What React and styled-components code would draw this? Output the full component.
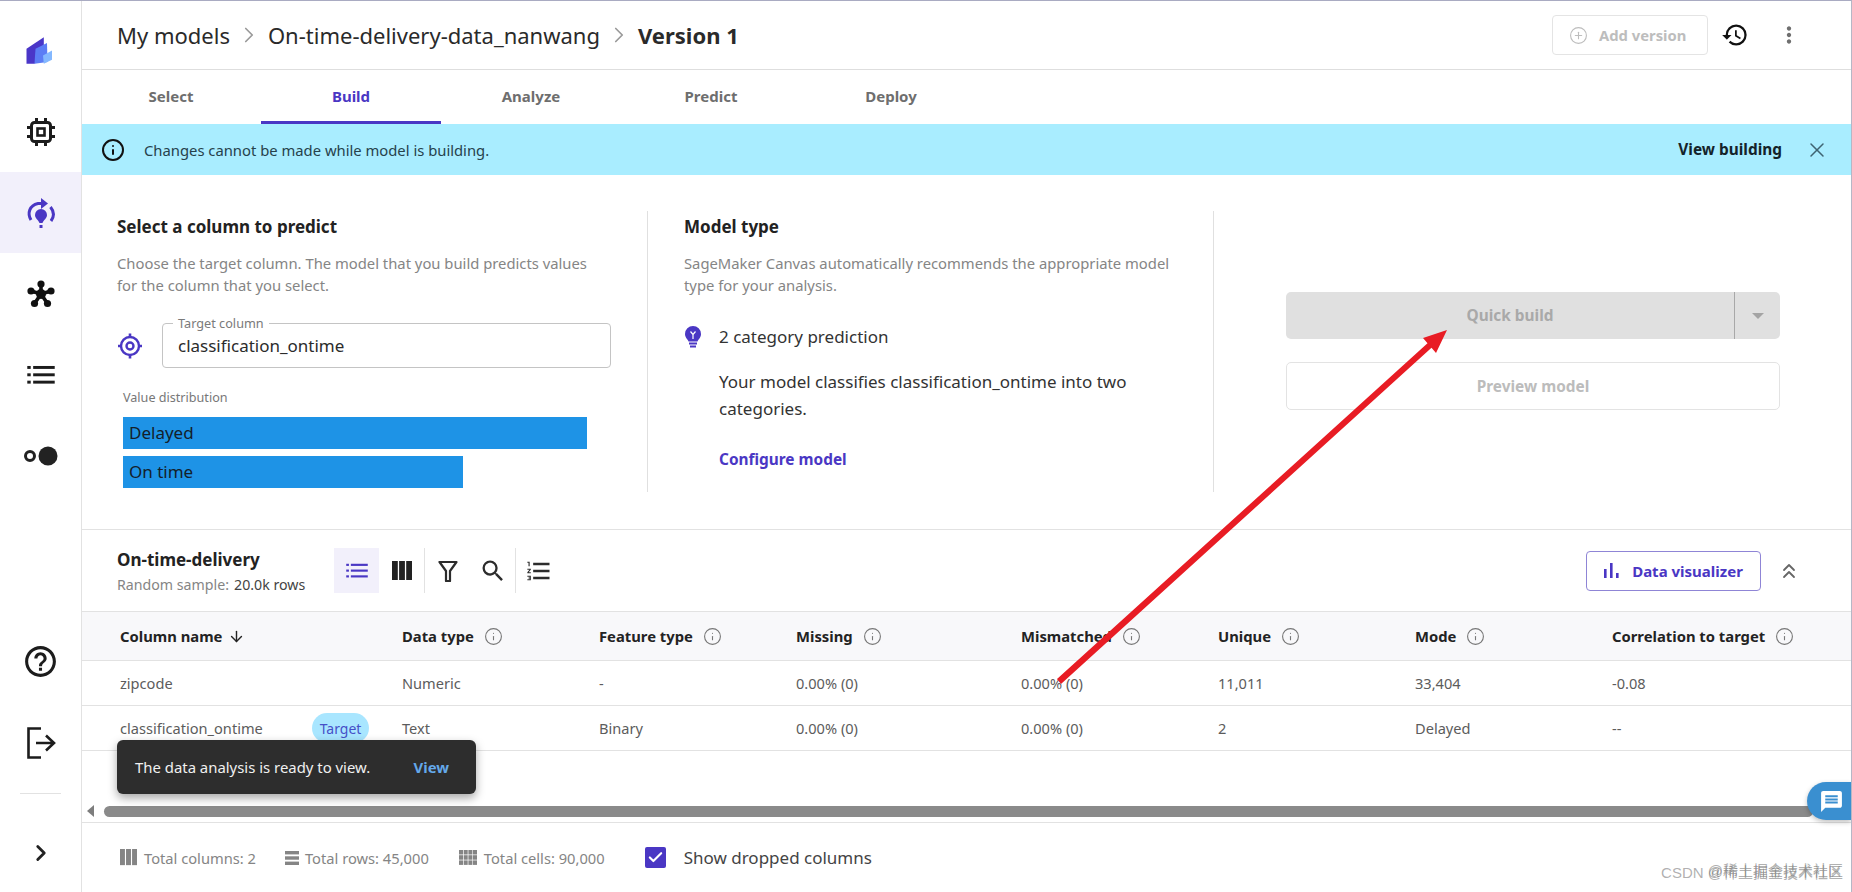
import React from "react";
import styled, { createGlobalStyle } from "styled-components";
import { ChevronRight, ChevronsUp, Info, X, Check, ArrowDown, CirclePlus } from "lucide-react";
import { MdHistory, MdMoreVert, MdSearch, MdFormatListNumbered, MdMessage, MdHelpOutline } from "react-icons/md";

const PURPLE = "#4a37c4";

const Global = createGlobalStyle`
  * { box-sizing: border-box; }
  html, body { margin: 0; padding: 0; background: #fff; }
  body { font-family: "Noto Sans", "Open Sans", sans-serif; color: #222; overflow: hidden; }
`;

const Page = styled.div`
  position: relative;
  width: 1852px;
  height: 892px;
  display: flex;
  border-top: 1px solid #a9abc2;
  border-right: 1px solid #b5b7c6;
  overflow: hidden;
`;

const Sidebar = styled.nav`
  width: 82px;
  flex: none;
  display: flex;
  flex-direction: column;
  padding-top: 9px;
  border-right: 1px solid #e2e2e2;
`;

const NavItem = styled.div`
  height: 81px;
  flex: none;
  display: flex;
  align-items: center;
  justify-content: center;
  background: ${(p) => (p.$active ? "#f2f0fb" : "transparent")};
  color: ${(p) => (p.$active ? PURPLE : "#1c1c1c")};
`;

const NavBottom = styled.div`
  margin-top: auto;
  display: flex;
  flex-direction: column;
`;

const NavRule = styled.div`
  height: 1px;
  margin: 10px 20px 0;
  background: #e2e2e2;
`;

const NavExpand = styled.div`
  height: 98px;
  padding-top: 20px;
  display: flex;
  align-items: center;
  justify-content: center;
  color: #222;
`;

const Main = styled.main`
  position: relative;
  flex: 1;
  min-width: 0;
  display: flex;
  flex-direction: column;
`;

const Header = styled.header`
  height: 69px;
  flex: none;
  display: flex;
  align-items: center;
  padding: 0 35px 0 35px;
  border-bottom: 1px solid #dedede;
`;

const Crumb = styled.span`
  font-size: 22px;
  font-weight: ${(p) => (p.$current ? 700 : 400)};
  color: #2a2a2a;
  white-space: nowrap;
`;

const CrumbSep = styled.span`
  display: flex;
  width: 38px;
  justify-content: center;
  color: #9a9a9a;
`;

const HeaderActions = styled.div`
  margin-left: auto;
  display: flex;
  align-items: center;
`;

const AddVersion = styled.div`
  width: 156px;
  height: 40px;
  border: 1px solid #e4e4e4;
  border-radius: 4px;
  display: flex;
  align-items: center;
  gap: 11px;
  padding-left: 16px;
  color: #bdbdbd;
  font-size: 14.8px;
  font-weight: 700;
`;

const HistoryBtn = styled.div`
  width: 54px;
  display: flex;
  justify-content: center;
  color: #111;
`;

const MoreBtn = styled.div`
  width: 54px;
  display: flex;
  justify-content: center;
  color: #6f6f6f;
`;

const Tabs = styled.div`
  height: 54px;
  flex: none;
  display: flex;
  margin-left: -1px;
`;

const Tab = styled.div`
  width: 180px;
  display: flex;
  align-items: center;
  justify-content: center;
  padding-top: 1px;
  font-size: 15px;
  font-weight: 700;
  color: ${(p) => (p.$active ? PURPLE : "#6e6e6e")};
  border-bottom: 3px solid ${(p) => (p.$active ? PURPLE : "transparent")};
`;

const Banner = styled.div`
  height: 51px;
  flex: none;
  display: flex;
  align-items: center;
  background: #a9edff;
  padding: 0 22px 0 19px;
  color: #173039;
`;

const BannerText = styled.span`
  font-size: 14.8px;
  margin-left: 19px;
  color: #26424c;
`;

const BannerAction = styled.span`
  margin-left: auto;
  font-size: 15.4px;
  font-weight: 700;
  color: #14232a;
`;

const BannerClose = styled.span`
  display: flex;
  margin-left: 23px;
  color: #3f6472;
`;

const Panels = styled.section`
  height: 355px;
  flex: none;
  display: grid;
  grid-template-columns: 565px 566px 1fr;
  padding: 36px 0 37px;
  border-bottom: 1px solid #e2e2e2;
`;

const Panel = styled.div`
  padding-left: ${(p) => p.$pad}px;
  border-left: ${(p) => (p.$rule ? "1px solid #e0e0e0" : "none")};
  min-width: 0;
`;

const PanelTitle = styled.h2`
  margin: 0;
  font-size: 17px;
  line-height: 32px;
  font-weight: 700;
  color: #222;
`;

const PanelDesc = styled.p`
  margin: 9px 0 0;
  width: 490px;
  font-size: 14.8px;
  line-height: 22px;
  color: #858585;
`;

const TargetRow = styled.div`
  display: flex;
  align-items: center;
  gap: 19px;
  margin-top: 27px;
`;

const TargetField = styled.div`
  position: relative;
  width: 449px;
  height: 45px;
  border: 1px solid #c4c4c4;
  border-radius: 4px;
  display: flex;
  align-items: center;
  padding: 0 15px;
  font-size: 17px;
  color: #2b2b2b;
`;

const FieldLabel = styled.span`
  position: absolute;
  top: -9px;
  left: 10px;
  padding: 0 5px;
  background: #fff;
  font-size: 12.7px;
  line-height: 16px;
  color: #7a7a7a;
`;

const DistLabel = styled.div`
  margin: 22px 0 0 6px;
  font-size: 12.6px;
  line-height: 16px;
  color: #777;
`;

const DistBars = styled.div`
  margin: 11px 0 0 6px;
  display: flex;
  flex-direction: column;
  gap: 7px;
`;

const DistBar = styled.div`
  height: 32px;
  background: #1e93e6;
  padding-left: 6px;
  font-size: 17px;
  line-height: 31px;
  color: #14202a;
`;

const PredictRow = styled.div`
  display: flex;
  align-items: center;
  gap: 17px;
  margin-top: 25px;
  font-size: 17px;
  line-height: 32px;
  color: #333;
`;

const PredictText = styled.p`
  margin: 15px 0 0 35px;
  width: 420px;
  font-size: 17px;
  line-height: 27px;
  color: #333;
`;

const ConfigureLink = styled.div`
  margin: 26px 0 0 35px;
  font-size: 15.4px;
  line-height: 24px;
  font-weight: 700;
  color: ${PURPLE};
`;

const BuildPanel = styled(Panel)`
  padding: 81px 71px 0 72px;
`;

const SplitButton = styled.div`
  height: 47px;
  display: flex;
  background: #e0e0e0;
  border-radius: 5px;
  color: #a9a9a9;
  font-size: 15.4px;
  font-weight: 700;
`;

const SplitMain = styled.div`
  flex: 1;
  display: flex;
  align-items: center;
  justify-content: center;
`;

const SplitCaret = styled.div`
  width: 46px;
  border-left: 1px solid #a8a8a8;
  display: flex;
  align-items: center;
  justify-content: center;
`;

const Caret = styled.span`
  width: 0;
  height: 0;
  border-left: 6px solid transparent;
  border-right: 6px solid transparent;
  border-top: 6px solid #a4a4a4;
`;

const PreviewButton = styled.div`
  height: 48px;
  margin-top: 23px;
  border: 1px solid #e3e3e3;
  border-radius: 5px;
  display: flex;
  align-items: center;
  justify-content: center;
  color: #bcbcbc;
  font-size: 15.4px;
  font-weight: 700;
`;

const Toolbar = styled.div`
  height: 81px;
  flex: none;
  display: flex;
  align-items: center;
  padding: 0 49px 0 35px;
`;

const DataTitle = styled.div`
  width: 217px;
  flex: none;
`;

const DataName = styled.div`
  font-size: 17px;
  line-height: 24px;
  font-weight: 700;
  color: #222;
`;

const DataSample = styled.div`
  margin-top: 4px;
  font-size: 14.2px;
  line-height: 18px;
  color: #858585;
`;

const SampleCount = styled.span`
  margin-left: 5px;
  color: #444;
`;

const ToolBtn = styled.div`
  width: 45px;
  height: 45px;
  display: flex;
  align-items: center;
  justify-content: center;
  color: ${(p) => (p.$active ? PURPLE : "#2c2c2c")};
  background: ${(p) => (p.$active ? "#f2f0fb" : "transparent")};
`;

const ToolRule = styled.div`
  width: 1px;
  height: 45px;
  background: #e2e2e2;
`;

const VisualizerBtn = styled.div`
  margin-left: auto;
  width: 175px;
  height: 40px;
  border: 1px solid #8f85d6;
  border-radius: 4px;
  display: flex;
  align-items: center;
  justify-content: center;
  gap: 13px;
  color: ${PURPLE};
  font-size: 15px;
  font-weight: 700;
`;

const CollapseBtn = styled.div`
  width: 27px;
  margin-left: 14px;
  display: flex;
  justify-content: center;
  color: #666;
`;

const Row = styled.div`
  display: grid;
  grid-template-columns: 282px 197px 197px 225px 197px 197px 197px 1fr;
  align-items: center;
  height: ${(p) => (p.$head ? 50 : 45)}px;
  padding-left: 38px;
  background: ${(p) => (p.$head ? "#f8f8fa" : "#fff")};
  border-top: ${(p) => (p.$head ? "1px solid #e2e2e2" : "none")};
  border-bottom: 1px solid #e2e2e2;
  font-size: ${(p) => (p.$head ? 14.8 : 14.6)}px;
  font-weight: ${(p) => (p.$head ? 700 : 400)};
  color: ${(p) => (p.$head ? "#232323" : "#5c5c5c")};
`;

const HeadCell = styled.div`
  display: flex;
  align-items: center;
  gap: ${(p) => p.$gap || 10}px;
  color: #232323;
  white-space: nowrap;
`;

const InfoMark = styled.span`
  display: flex;
  color: #777;
`;

const NameCell = styled.div`
  display: flex;
  align-items: center;
  justify-content: space-between;
  padding-right: 33px;
`;

const TargetPill = styled.span`
  width: 57px;
  height: 30px;
  border-radius: 15px;
  background: #a9e6ff;
  color: #4650c8;
  display: flex;
  align-items: center;
  justify-content: center;
  font-size: 14px;
`;

const ScrollArea = styled.div`
  height: 72px;
  flex: none;
  display: flex;
  align-items: flex-end;
  gap: 10px;
  padding: 0 38px 5px 5px;
  border-bottom: 1px solid #e2e2e2;
`;

const ScrollArrow = styled.span`
  width: 0;
  height: 0;
  border-top: 6px solid transparent;
  border-bottom: 6px solid transparent;
  border-right: 7px solid #7d7d7d;
`;

const ScrollThumb = styled.div`
  flex: 1;
  height: 11px;
  border-radius: 6px;
  background: #8a8a8a;
`;

const Footer = styled.footer`
  flex: 1;
  display: flex;
  align-items: center;
  padding: 0 0 0 38px;
  font-size: 14.7px;
  color: #858585;
`;

const Stat = styled.div`
  display: flex;
  align-items: center;
  gap: ${(p) => p.$gap}px;
  margin-right: ${(p) => p.$after}px;
  white-space: nowrap;
`;

const CheckBox = styled.span`
  width: 21px;
  height: 21px;
  border-radius: 2px;
  background: ${PURPLE};
  color: #fff;
  display: flex;
  align-items: center;
  justify-content: center;
`;

const CheckLabel = styled.span`
  margin-left: 18px;
  font-size: 17px;
  color: #444;
`;

const Toast = styled.div`
  position: absolute;
  left: 35px;
  bottom: 98px;
  width: 359px;
  height: 54px;
  background: #2d2d2d;
  border-radius: 6px;
  box-shadow: 0 4px 10px rgba(0, 0, 0, 0.35);
  display: flex;
  align-items: center;
  padding: 0 27px 0 18px;
  color: #f0f0f0;
  font-size: 14.9px;
`;

const ToastAction = styled.span`
  margin-left: auto;
  font-weight: 700;
  color: #64a8ea;
`;

const ChatBubble = styled.div`
  position: absolute;
  top: 781px;
  right: 0;
  width: 44px;
  height: 38px;
  border-radius: 19px 0 0 19px;
  background: #3a8fd0;
  box-shadow: 0 2px 5px rgba(0, 0, 0, 0.25);
  color: #fff;
  display: flex;
  align-items: center;
  justify-content: center;
  padding-left: 4px;
`;

const Annotation = styled.svg`
  position: absolute;
  top: -1px;
  left: 0;
  width: 1852px;
  height: 892px;
  pointer-events: none;
`;

const Watermark = styled.span`
  position: absolute;
  right: ${(p) => p.$right}px;
  bottom: ${(p) => p.$bottom}px;
  font-family: "Liberation Sans", "Noto Sans CJK SC", sans-serif;
  font-size: 15px;
  line-height: 22px;
  color: rgba(110, 110, 110, 0.55);
  white-space: nowrap;
`;

const Logo = () => (
  <svg width="30" height="30" viewBox="0 0 30 30">
    <polygon points="0.5,12.8 17.8,1.2 17.8,20 8.5,27.8 0.5,27.8" fill="#4a36c8" />
    <polygon points="9.5,12.8 21,7 21.5,26 8.5,27.800" fill="#5c7df5" />
    <polygon points="17,19.500 26,14.500 26,23.800 17.800,27.800" fill="#84b8ff" />
  </svg>
);

const ChipIcon = () => (
  <svg width="30" height="30" viewBox="0 0 30 30" fill="none" stroke="#1c1c1c">
    <rect x="5.5" y="5.5" width="19" height="19" rx="3" strokeWidth="3" />
    <rect x="11.5" y="11.5" width="7" height="7" strokeWidth="2.6" />
    <path d="M10.5 1v4M19.5 1v4M10.5 25v4M19.5 25v4M1 10.5h4M1 19.5h4M25 10.5h4M25 19.5h4" strokeWidth="3" />
  </svg>
);

const BuildIcon = () => (
  <svg width="30" height="32" viewBox="0 0 30 32" fill="none">
    <path d="M5 23C1 16 3.5 8.5 12 6.5h6" stroke={PURPLE} strokeWidth="3" />
    <path d="M24.5 10C28.5 15 28 20 25 24" stroke={PURPLE} strokeWidth="3" />
    <polygon points="15,1 22,6.5 15,12" fill={PURPLE} />
    <path d="M15 12a6 6 0 0 1 6 6c0 3.5-3.5 5-4.5 8h-3c-1-3-4.500-4.500-4.500-8a6 6 0 0 1 6-6z" fill={PURPLE} />
    <rect x="13.500" y="28" width="3" height="3" fill={PURPLE} />
  </svg>
);

const NetworkIcon = () => (
  <svg width="30" height="30" viewBox="0 0 30 30" fill="#111" stroke="#111" strokeWidth="3.600">
    <path d="M15 15V5M15 15L5 12M15 15L25 12M15 15L8.500 24.500M15 15L21.500 24.500" />
    <circle cx="15" cy="15" r="5" stroke="none" />
    <circle cx="15" cy="5" r="3.600" stroke="none" />
    <circle cx="5" cy="12" r="3.600" stroke="none" />
    <circle cx="25" cy="12" r="3.600" stroke="none" />
    <circle cx="8.500" cy="24.500" r="3.600" stroke="none" />
    <circle cx="21.500" cy="24.500" r="3.600" stroke="none" />
  </svg>
);

const ListLines = ({ size = 28, color = "#1c1c1c", weight = 3 }) => (
  <svg width={size} height={size * 0.7} viewBox="0 0 28 20" fill={color}>
    <rect x="0" y="1" width="3.500" height={weight} />
    <rect x="0" y="8.500" width="3.500" height={weight} />
    <rect x="0" y="16" width="3.500" height={weight} />
    <rect x="6" y="1" width="22" height={weight} />
    <rect x="6" y="8.500" width="22" height={weight} />
    <rect x="6" y="16" width="22" height={weight} />
  </svg>
);

const DotsIcon = () => (
  <svg width="34" height="22" viewBox="0 0 34 22">
    <circle cx="6" cy="11" r="4.500" fill="none" stroke="#222" strokeWidth="3" />
    <circle cx="24" cy="11" r="9.500" fill="#222" />
  </svg>
);

const LogoutIcon = () => (
  <svg width="30" height="34" viewBox="0 0 30 34" fill="none" stroke="#1c1c1c" strokeWidth="2.600">
    <path d="M15 2.500H2.500v29H15" />
    <path d="M10 17h18M20 9.500l8 7.500-8 7.500" />
  </svg>
);

const TargetIcon = () => (
  <svg width="26" height="30" viewBox="0 0 26 30" fill="none" stroke={PURPLE}>
    <circle cx="13" cy="15" r="9" strokeWidth="2.400" />
    <circle cx="13" cy="15" r="3.500" strokeWidth="2.400" />
    <path d="M13 2.500v4M13 23.500v4M1 15h3.500M21.500 15H25" strokeWidth="2.600" />
  </svg>
);

const BulbIcon = () => (
  <svg width="18" height="22" viewBox="0 0 18 22">
    <path d="M9 0a8 8 0 0 1 8 8c0 3.500-2.500 5-3.500 7.500h-9C3.500 13 1 11.500 1 8a8 8 0 0 1 8-8z" fill={PURPLE} />
    <path d="M6.500 5.500L9 8.500l2.500-3M9 8.500V13" stroke="#fff" strokeWidth="1.200" fill="none" />
    <rect x="5" y="16.500" width="8" height="2" fill={PURPLE} />
    <rect x="6" y="19.500" width="6" height="2" fill={PURPLE} />
  </svg>
);

const ColumnsIcon = ({ size = 20, color = "#222" }) => (
  <svg width={size} height={size * 0.95} viewBox="0 0 20 19" fill={color}>
    <rect x="0" y="0" width="5.800" height="19" />
    <rect x="7.100" y="0" width="5.800" height="19" />
    <rect x="14.200" y="0" width="5.800" height="19" />
  </svg>
);

const FilterIcon = () => (
  <svg width="20" height="22" viewBox="0 0 20 22" fill="none" stroke="#2c2c2c" strokeWidth="2.200">
    <path d="M1.500 2h17L12 11v10H8V11z" strokeLinejoin="round" />
  </svg>
);

const RowsIcon = () => (
  <svg width="14" height="14" viewBox="0 0 14 14" fill="#858585">
    <rect y="0" width="14" height="3.400" />
    <rect y="5.300" width="14" height="3.400" />
    <rect y="10.600" width="14" height="3.400" />
  </svg>
);

const GridIcon = () => (
  <svg width="18" height="15" viewBox="0 0 18 15" fill="#858585">
    {[0, 5.2, 10.4].map((y) =>
      [0, 4.7, 9.4, 14].map((x) => <rect key={`${x}-${y}`} x={x} y={y} width="4" height="4.500" />)
    )}
  </svg>
);

const BarsIcon = () => (
  <svg width="15" height="15" viewBox="0 0 15 15" fill={PURPLE}>
    <rect x="0" y="6" width="2.600" height="9" />
    <rect x="6" y="0" width="2.600" height="15" />
    <rect x="12" y="10" width="2.600" height="5" />
  </svg>
);

const InfoTip = () => (
  <InfoMark>
    <Info size={19} strokeWidth={1.4} />
  </InfoMark>
);

const columns = [
  { title: "Data type" },
  { title: "Feature type" },
  { title: "Missing" },
  { title: "Mismatched" },
  { title: "Unique" },
  { title: "Mode" },
  { title: "Correlation to target" },
];

const rows = [
  { name: "zipcode", cells: ["Numeric", "-", "0.00% (0)", "0.00% (0)", "11,011", "33,404", "-0.08"] },
  { name: "classification_ontime", target: true, cells: ["Text", "Binary", "0.00% (0)", "0.00% (0)", "2", "Delayed", "--"] },
];

export default function App() {
  return (
    <>
      <Global />
      <Page>
        <Sidebar>
          <NavItem><Logo /></NavItem>
          <NavItem><ChipIcon /></NavItem>
          <NavItem $active><BuildIcon /></NavItem>
          <NavItem><NetworkIcon /></NavItem>
          <NavItem><ListLines /></NavItem>
          <NavItem><DotsIcon /></NavItem>
          <NavBottom>
            <NavItem><MdHelpOutline size={37} /></NavItem>
            <NavItem><LogoutIcon /></NavItem>
            <NavRule />
            <NavExpand><ChevronRight size={26} strokeWidth={2.6} /></NavExpand>
          </NavBottom>
        </Sidebar>
        <Main>
          <Header>
            <Crumb>My models</Crumb>
            <CrumbSep><ChevronRight size={26} strokeWidth={1.6} /></CrumbSep>
            <Crumb>On-time-delivery-data_nanwang</Crumb>
            <CrumbSep><ChevronRight size={26} strokeWidth={1.6} /></CrumbSep>
            <Crumb $current>Version 1</Crumb>
            <HeaderActions>
              <AddVersion><CirclePlus size={19} strokeWidth={1.4} />Add version</AddVersion>
              <HistoryBtn><MdHistory size={28} /></HistoryBtn>
              <MoreBtn><MdMoreVert size={26} /></MoreBtn>
            </HeaderActions>
          </Header>
          <Tabs>
            <Tab>Select</Tab>
            <Tab $active>Build</Tab>
            <Tab>Analyze</Tab>
            <Tab>Predict</Tab>
            <Tab>Deploy</Tab>
          </Tabs>
          <Banner>
            <Info size={24} strokeWidth={2} color="#111" />
            <BannerText>Changes cannot be made while model is building.</BannerText>
            <BannerAction>View building</BannerAction>
            <BannerClose><X size={24} strokeWidth={1.5} /></BannerClose>
          </Banner>
          <Panels>
            <Panel $pad={35}>
              <PanelTitle>Select a column to predict</PanelTitle>
              <PanelDesc>Choose the target column. The model that you build predicts values for the column that you select.</PanelDesc>
              <TargetRow>
                <TargetIcon />
                <TargetField>
                  <FieldLabel>Target column</FieldLabel>
                  classification_ontime
                </TargetField>
              </TargetRow>
              <DistLabel>Value distribution</DistLabel>
              <DistBars>
                <DistBar style={{ width: 464 }}>Delayed</DistBar>
                <DistBar style={{ width: 340 }}>On time</DistBar>
              </DistBars>
            </Panel>
            <Panel $pad={36} $rule>
              <PanelTitle>Model type</PanelTitle>
              <PanelDesc>SageMaker Canvas automatically recommends the appropriate model type for your analysis.</PanelDesc>
              <PredictRow><BulbIcon />2 category prediction</PredictRow>
              <PredictText>Your model classifies classification_ontime into two categories.</PredictText>
              <ConfigureLink>Configure model</ConfigureLink>
            </Panel>
            <BuildPanel $rule>
              <SplitButton>
                <SplitMain>Quick build</SplitMain>
                <SplitCaret><Caret /></SplitCaret>
              </SplitButton>
              <PreviewButton>Preview model</PreviewButton>
            </BuildPanel>
          </Panels>
          <Toolbar>
            <DataTitle>
              <DataName>On-time-delivery</DataName>
              <DataSample>Random sample:<SampleCount>20.0k rows</SampleCount></DataSample>
            </DataTitle>
            <ToolBtn $active><ListLines size={22} color={PURPLE} weight={2.8} /></ToolBtn>
            <ToolBtn><ColumnsIcon /></ToolBtn>
            <ToolRule />
            <ToolBtn><FilterIcon /></ToolBtn>
            <ToolBtn><MdSearch size={28} /></ToolBtn>
            <ToolRule />
            <ToolBtn><MdFormatListNumbered size={28} /></ToolBtn>
            <VisualizerBtn><BarsIcon />Data visualizer</VisualizerBtn>
            <CollapseBtn><ChevronsUp size={24} strokeWidth={1.8} /></CollapseBtn>
          </Toolbar>
          <Row $head>
            <HeadCell $gap={6}>Column name <ArrowDown size={17} strokeWidth={2} /></HeadCell>
            {columns.map((c) => (
              <HeadCell key={c.title}>{c.title}<InfoTip /></HeadCell>
            ))}
          </Row>
          {rows.map((r) => (
            <Row key={r.name}>
              <NameCell>
                {r.name}
                {r.target && <TargetPill>Target</TargetPill>}
              </NameCell>
              {r.cells.map((c, i) => (
                <div key={i}>{c}</div>
              ))}
            </Row>
          ))}
          <ScrollArea>
            <ScrollArrow />
            <ScrollThumb />
          </ScrollArea>
          <Footer>
            <Stat $gap={7} $after={29}><ColumnsIcon size={17} color="#858585" />Total columns: 2</Stat>
            <Stat $gap={6} $after={30}><RowsIcon />Total rows: 45,000</Stat>
            <Stat $gap={7} $after={40}><GridIcon />Total cells: 90,000</Stat>
            <CheckBox><Check size={17} strokeWidth={3} /></CheckBox>
            <CheckLabel>Show dropped columns</CheckLabel>
          </Footer>
          <Toast>
            The data analysis is ready to view.
            <ToastAction>View</ToastAction>
          </Toast>
          <ChatBubble><MdMessage size={25} /></ChatBubble>
        </Main>
        <Annotation viewBox="0 0 1852 892">
          <polygon
            points="1057,679 1427.5,343.3 1423,338 1447,330 1436,353 1431.5,347.7 1061,684"
            fill="#e81c24"
          />
        </Annotation>
        <Watermark $right={8} $bottom={8}>CSDN @稀土掘金技术社区</Watermark>
        <Watermark $right={8} $bottom={10}>@稀土掘金技术社区</Watermark>
      </Page>
    </>
  );
}
